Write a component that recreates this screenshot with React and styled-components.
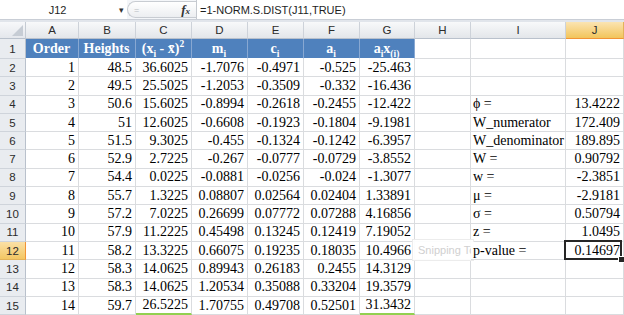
import React from 'react';
import styled, { createGlobalStyle, css } from 'styled-components';

const GlobalStyle = createGlobalStyle`
  body {
    margin: 0;
    background: #ffffff;
    overflow: hidden;
  }
`;

const columns = ['A', 'B', 'C', 'D', 'E', 'F', 'G', 'H', 'I', 'J'];

const rows = [
  ['1', '48.5', '36.6025', '-1.7076', '-0.4971', '-0.525', '-25.463', '', '', ''],
  ['2', '49.5', '25.5025', '-1.2053', '-0.3509', '-0.332', '-16.436', '', '', ''],
  ['3', '50.6', '15.6025', '-0.8994', '-0.2618', '-0.2455', '-12.422', '', 'ϕ =', '13.4222'],
  ['4', '51', '12.6025', '-0.6608', '-0.1923', '-0.1804', '-9.1981', '', 'W_numerator', '172.409'],
  ['5', '51.5', '9.3025', '-0.455', '-0.1324', '-0.1242', '-6.3957', '', 'W_denominator', '189.895'],
  ['6', '52.9', '2.7225', '-0.267', '-0.0777', '-0.0729', '-3.8552', '', 'W =', '0.90792'],
  ['7', '54.4', '0.0225', '-0.0881', '-0.0256', '-0.024', '-1.3077', '', 'w =', '-2.3851'],
  ['8', '55.7', '1.3225', '0.08807', '0.02564', '0.02404', '1.33891', '', 'μ =', '-2.9181'],
  ['9', '57.2', '7.0225', '0.26699', '0.07772', '0.07288', '4.16856', '', 'σ =', '0.50794'],
  ['10', '57.9', '11.2225', '0.45498', '0.13245', '0.12419', '7.19052', '', 'z =', '1.0495'],
  ['11', '58.2', '13.3225', '0.66075', '0.19235', '0.18035', '10.4966', '', 'p-value =', '0.14697'],
  ['12', '58.3', '14.0625', '0.89943', '0.26183', '0.2455', '14.3129', '', '', ''],
  ['13', '58.3', '14.0625', '1.20534', '0.35088', '0.33204', '19.3579', '', '', ''],
  ['14', '59.7', '26.5225', '1.70755', '0.49708', '0.52501', '31.3432', '', '', ''],
];

const headers = [
  'Order',
  'Heights',
  <>(x<sub>i</sub> - x̄)<sup>2</sup></>,
  <>m<sub>i</sub></>,
  <>c<sub>i</sub></>,
  <>a<sub>i</sub></>,
  <>a<sub>i</sub>x<sub>(i)</sub></>,
];

export default function App() {
  return (
    <Window>
      <GlobalStyle />
      <FormulaBar>
        <NameBox>J12</NameBox>
        <DropArrow>▾</DropArrow>
        <Splitter>
          <Grip>=</Grip>
          <Fx>
            f<small>x</small>
          </Fx>
        </Splitter>
        <FormulaInput>=1-NORM.S.DIST(J11,TRUE)</FormulaInput>
      </FormulaBar>
      <Band />
      <Sheet>
        <Corner>
          <svg width="11" height="11" viewBox="0 0 11 11">
            <path d="M11 0 L11 11 L0 11 Z" fill="#c6ccd4" />
          </svg>
        </Corner>
        {columns.map((c) => (
          <ColHeader key={c} $active={c === 'J'}>
            {c}
          </ColHeader>
        ))}

        <RowHeader>1</RowHeader>
        {columns.map((c, i) => (
          <Cell key={c} $head={i < 7} $align="center">
            <span>{headers[i] || ''}</span>
          </Cell>
        ))}

        {rows.map((r, ri) => {
          const rowNo = ri + 2;
          return (
            <React.Fragment key={rowNo}>
              <RowHeader $active={rowNo === 12}>{rowNo}</RowHeader>
              {r.map((v, ci) => (
                <Cell
                  key={ci}
                  $align={ci === 8 ? 'left' : 'right'}
                  $front={rowNo === 12 && ci === 8}
                  $selected={rowNo === 12 && ci === 9}
                  $green={rowNo === 15 && (ci === 2 || ci === 6)}
                >
                  {v}
                </Cell>
              ))}
            </React.Fragment>
          );
        })}

        <SnipTip>
          <svg width="10" height="10" viewBox="0 0 10 10">
            <circle cx="4" cy="5" r="3.2" fill="none" stroke="#f0b8b8" strokeWidth="1.2" />
            <path d="M6 3 L9 1 M6 7 L9 9" stroke="#e8c0c0" strokeWidth="1" />
          </svg>
          <SnipText>Snipping Tool</SnipText>
        </SnipTip>
      </Sheet>
    </Window>
  );
}

const Window = styled.div`
  width: 624px;
  height: 315px;
  overflow: hidden;
  background: #ffffff;
`;

const FormulaBar = styled.div`
  display: flex;
  align-items: stretch;
  height: 20px;
  background: #f4f6f9;
  border-bottom: 1px solid #c9ced6;
  box-sizing: border-box;
  font-family: 'Liberation Sans', Arial, sans-serif;
  font-size: 11px;
  color: #1e1e1e;
`;

const NameBox = styled.div`
  width: 115px;
  display: flex;
  align-items: center;
  justify-content: center;
  background: #ffffff;
  box-sizing: border-box;
`;

const DropArrow = styled.div`
  width: 12px;
  display: flex;
  align-items: center;
  justify-content: center;
  font-size: 9px;
  color: #333;
  background: #ffffff;
`;

const Splitter = styled.div`
  flex: 0 0 69px;
  display: flex;
  align-items: center;
  justify-content: space-between;
  margin: 1px 0;
  padding: 0 6px 0 6px;
  border: 1px solid #c8ccd2;
  border-right: none;
  border-radius: 9px 0 0 9px;
  background: linear-gradient(#ffffff, #eceef1);
  box-sizing: border-box;
`;

const Grip = styled.span`
  font-size: 9px;
  color: #b8bcc2;
`;

const Fx = styled.span`
  font-family: 'Liberation Serif', 'Times New Roman', serif;
  font-style: italic;
  font-weight: bold;
  font-size: 13px;
  color: #333;

  small {
    font-size: 9px;
  }
`;

const FormulaInput = styled.div`
  flex: 1;
  display: flex;
  align-items: center;
  padding-left: 3px;
  background: #ffffff;
  border-left: 1px solid #c5c9cf;
`;

const Band = styled.div`
  height: 2px;
  background: #e1e5eb;
`;

const Sheet = styled.div`
  position: relative;
  display: grid;
  grid-template-columns: 26px 53px 57px 56px 56px 56px 56px 55px 56px 95px 58px;
  grid-template-rows: 17px 20px repeat(14, 18.3px);
  font-family: 'Liberation Serif', 'Times New Roman', serif;
  font-size: 14px;
  color: #000;
`;

const Corner = styled.div`
  display: flex;
  align-items: flex-end;
  justify-content: flex-end;
  padding: 0 2px 2px 0;
  background: linear-gradient(#f7f8fa, #e4e7ec);
  border-right: 1px solid #c5cbd3;
  border-bottom: 1px solid #b9c1cc;
  box-sizing: border-box;
`;

const headerLook = css`
  display: flex;
  align-items: center;
  justify-content: center;
  font-family: 'Liberation Sans', Arial, sans-serif;
  font-size: 11.5px;
  color: #2b2b2b;
  box-sizing: border-box;
`;

const ColHeader = styled.div`
  ${headerLook}
  background: ${(p) =>
    p.$active ? 'linear-gradient(#fbe4b2, #f2c55c)' : 'linear-gradient(#f8f9fa, #e3e6ea)'};
  border-right: 1px solid ${(p) => (p.$active ? '#e3b35a' : '#cdd2d9')};
  border-bottom: 1px solid ${(p) => (p.$active ? '#f29436' : '#b9c1cc')};
`;

const RowHeader = styled.div`
  ${headerLook}
  background: ${(p) => (p.$active ? 'linear-gradient(#fbe0a6, #f3c763)' : '#e9ecf0')};
  border-right: 1px solid ${(p) => (p.$active ? '#f29436' : '#b9c1cc')};
  border-bottom: 1px solid ${(p) => (p.$active ? '#e3b35a' : '#cfd4db')};
`;

const Cell = styled.div`
  position: relative;
  display: flex;
  align-items: center;
  justify-content: ${(p) =>
    p.$align === 'left' ? 'flex-start' : p.$align === 'center' ? 'center' : 'flex-end'};
  padding: 0 3px 0 2px;
  white-space: nowrap;
  box-sizing: border-box;
  border-right: 1px solid #dadcdf;
  border-bottom: 1px solid #dadcdf;
  z-index: ${(p) => (p.$front || p.$selected ? 2 : 'auto')};
  background: ${(p) => (p.$front ? '#ffffff' : 'transparent')};

  sub,
  sup {
    font-size: 9.5px;
    line-height: 0;
  }

  ${(p) =>
    p.$head &&
    css`
      background: #4f81bd;
      color: #ffffff;
      font-weight: bold;
      border-right: 1px solid #88a8d2;
      border-bottom: 1px solid #ffffff;
    `}

  ${(p) =>
    p.$green &&
    css`
      border-bottom: 2px solid #92d050;
    `}

  ${(p) =>
    p.$selected &&
    css`
      &::before {
        content: '';
        position: absolute;
        left: -2px;
        top: -2px;
        right: 1px;
        bottom: -1px;
        border: 2px solid #262626;
      }

      &::after {
        content: '';
        position: absolute;
        right: -2px;
        bottom: -4px;
        width: 5px;
        height: 5px;
        background: #262626;
        border: 1px solid #ffffff;
      }
    `}
`;

const SnipTip = styled.div`
  position: absolute;
  left: 412px;
  top: 217px;
  width: 62px;
  height: 22px;
  display: flex;
  align-items: center;
  gap: 3px;
  padding-left: 2px;
  white-space: nowrap;
  box-sizing: border-box;
  background: rgba(255, 255, 255, 0.92);
  border: 1px solid #ececec;
  font-family: 'Liberation Sans', Arial, sans-serif;
  font-size: 11px;
  color: #d2d2d2;
  z-index: 1;
`;

const SnipText = styled.span`
  color: #d0d0d0;
`;
